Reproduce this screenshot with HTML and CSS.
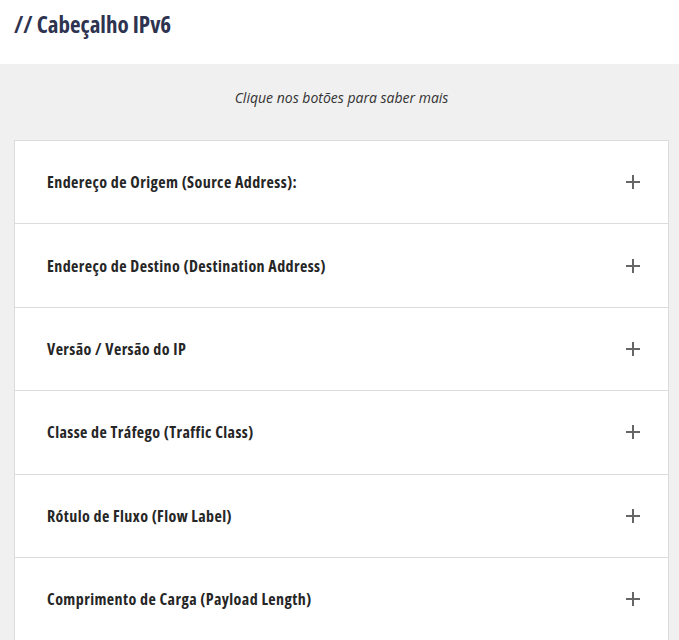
FILE: index.html
```html
<!DOCTYPE html>
<html lang="pt">
<head>
<meta charset="utf-8">
<link rel="stylesheet" href="styles.css">
</head>
<body>
<header class="top">
  <h1 class="title">// Cabeçalho IPv6</h1>
</header>
<section class="panel">
  <p class="hint">Clique nos botões para saber mais</p>
  <div class="accordion">
    <div class="item"><span class="label">Endereço de Origem (Source Address):</span><span class="plus"></span></div>
    <div class="item"><span class="label">Endereço de Destino (Destination Address)</span><span class="plus"></span></div>
    <div class="item"><span class="label">Versão / Versão do IP</span><span class="plus"></span></div>
    <div class="item"><span class="label">Classe de Tráfego (Traffic Class)</span><span class="plus"></span></div>
    <div class="item"><span class="label">Rótulo de Fluxo (Flow Label)</span><span class="plus"></span></div>
    <div class="item"><span class="label">Comprimento de Carga (Payload Length)</span><span class="plus"></span></div>
  </div>
</section>
</body>
</html>
```
FILE: styles.css
```css
html, body {
  margin: 0;
  padding: 0;
  background: #fff;
  font-family: "Open Sans", "Liberation Sans", sans-serif;
}
.top {
  height: 64px;
  padding: 0 14px;
  box-sizing: border-box;
}
.title {
  margin: 0;
  padding-top: 9px;
  font-size: 23px;
  line-height: 30px;
  font-weight: 700;
  font-stretch: 75%;
  color: #2e3350;
}
.panel {
  background: #f0f0f0;
  padding: 24px 10px 0 14px;
  height: 576px;
  overflow: hidden;
  box-sizing: border-box;
}
.hint {
  margin: 0 0 32px;
  text-align: center;
  font-style: italic;
  font-size: 14px;
  line-height: 20px;
  color: #333;
}
.accordion {
  background: #fff;
  border: 1px solid #dcdcdc;
  border-bottom: 0;
}
.item {
  height: 82.4px;
  border-bottom: 1px solid #dcdcdc;
  display: flex;
  align-items: center;
  justify-content: space-between;
  padding: 0 28px 0 32px;
}
.label {
  font-size: 16px;
  font-weight: 700;
  font-stretch: 75%;
  letter-spacing: 0.42px;
  color: #262626;
}
.plus {
  position: relative;
  width: 14px;
  height: 14px;
}
.plus::before, .plus::after {
  content: "";
  position: absolute;
  background: #666;
}
.plus::before { left: 0; right: 0; top: 6px; height: 2px; }
.plus::after { top: 0; bottom: 0; left: 6px; width: 2px; }
```
